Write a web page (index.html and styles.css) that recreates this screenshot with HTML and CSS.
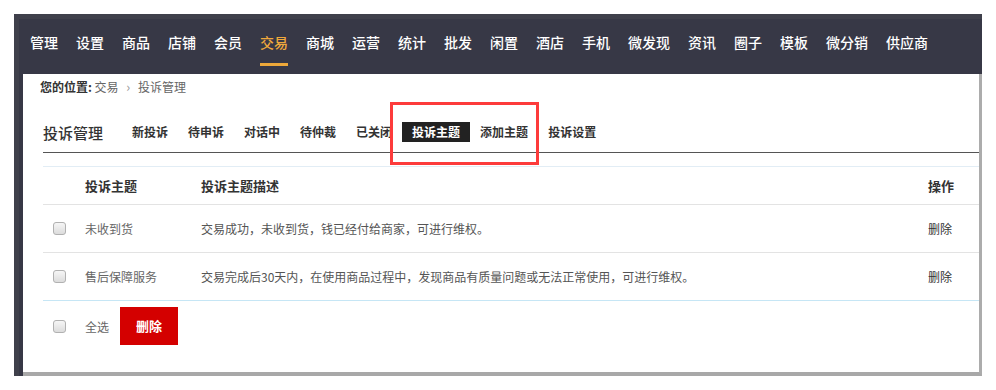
FILE: index.html
```html
<!DOCTYPE html>
<html lang="zh-CN">
<head>
    <meta charset="UTF-8">
    <title>投诉管理</title>
    <link rel="stylesheet" href="styles.css">
</head>
<body>
    <div class="frame">
        <div class="topnav">
            <a class="nav-item"><span>管理</span></a>
            <a class="nav-item"><span>设置</span></a>
            <a class="nav-item"><span>商品</span></a>
            <a class="nav-item"><span>店铺</span></a>
            <a class="nav-item"><span>会员</span></a>
            <a class="nav-item active"><span>交易</span></a>
            <a class="nav-item"><span>商城</span></a>
            <a class="nav-item"><span>运营</span></a>
            <a class="nav-item"><span>统计</span></a>
            <a class="nav-item"><span>批发</span></a>
            <a class="nav-item"><span>闲置</span></a>
            <a class="nav-item"><span>酒店</span></a>
            <a class="nav-item"><span>手机</span></a>
            <a class="nav-item"><span>微发现</span></a>
            <a class="nav-item"><span>资讯</span></a>
            <a class="nav-item"><span>圈子</span></a>
            <a class="nav-item"><span>模板</span></a>
            <a class="nav-item"><span>微分销</span></a>
            <a class="nav-item"><span>供应商</span></a>
        </div>

        <div class="content">
            <div class="crumb">
                <strong>您的位置:</strong> 交易
                <span class="arrow">&rsaquo;</span>
                投诉管理
            </div>

            <div class="main">
                <div class="tab-row">
                    <h3 class="page-title">投诉管理</h3>
                    <a class="tab">新投诉</a>
                    <a class="tab">待申诉</a>
                    <a class="tab">对话中</a>
                    <a class="tab">待仲裁</a>
                    <a class="tab">已关闭</a>
                    <a class="tab active">投诉主题</a>
                    <a class="tab">添加主题</a>
                    <a class="tab">投诉设置</a>
                </div>

                <table class="list">
                    <colgroup>
                        <col class="c-check">
                        <col class="c-name">
                        <col>
                        <col class="c-op">
                    </colgroup>
                    <thead>
                        <tr>
                            <th></th>
                            <th>投诉主题</th>
                            <th>投诉主题描述</th>
                            <th>操作</th>
                        </tr>
                    </thead>
                    <tbody>
                        <tr>
                            <td><input type="checkbox" class="chk"></td>
                            <td class="name">未收到货</td>
                            <td class="desc">交易成功，未收到货，钱已经付给商家，可进行维权。</td>
                            <td><a class="op">删除</a></td>
                        </tr>
                        <tr class="last">
                            <td><input type="checkbox" class="chk"></td>
                            <td class="name">售后保障服务</td>
                            <td class="desc">交易完成后30天内，在使用商品过程中，发现商品有质量问题或无法正常使用，可进行维权。</td>
                            <td><a class="op">删除</a></td>
                        </tr>
                    </tbody>
                    <tfoot>
                        <tr>
                            <td><input type="checkbox" class="chk"></td>
                            <td colspan="3">
                                <div class="batch">
                                    <span class="name">全选</span>
                                    <a class="btn-del">删除</a>
                                </div>
                            </td>
                        </tr>
                    </tfoot>
                </table>
            </div>
        </div>
    </div>

    <div class="mark"></div>
</body>
</html>
```

FILE: styles.css
```css
body {
    margin: 0;
    background: #fff;
    font-family: "Noto Sans CJK SC", "Microsoft YaHei", sans-serif;
    color: #333;
}
a {
    text-decoration: none;
    cursor: pointer;
}
.frame {
    margin: 14px 0 0 14px;
    width: 968px;
    height: 362px;
    background: #373846;
    box-shadow: inset 5px 5px 0 #3f404b;
    display: flex;
    flex-direction: column;
}
.topnav {
    height: 60px;
    padding-left: 7px;
    display: flex;
    flex-shrink: 0;
}
.nav-item {
    padding: 19px 9px 0;
    color: #fff;
    font-size: 14px;
    font-weight: 500;
    line-height: 18px;
}
.nav-item span {
    display: block;
    padding-bottom: 12px;
    border-bottom: 3px solid transparent;
}
.nav-item.active {
    color: #f0a93c;
}
.nav-item.active span {
    border-bottom-color: #eda83a;
}
.content {
    flex: 1;
    margin-left: 9px;
    padding-left: 17px;
    background: #fff;
    border-right: 3px solid #acacac;
    border-bottom: 4px solid #a8a8a8;
}
.crumb {
    height: 26px;
    line-height: 26px;
    font-size: 12px;
    color: #666;
}
.crumb strong {
    color: #333;
}
.crumb .arrow {
    color: #999;
    margin: 0 5px;
    font-size: 13px;
}
.main {
    margin-left: 3px;
}
.tab-row {
    margin-top: 22px;
    padding-bottom: 10px;
    border-bottom: 1px solid #555;
    display: flex;
    align-items: center;
}
.page-title {
    margin: 0 19px 0 0;
    font-size: 15px;
    font-weight: 500;
    line-height: 20px;
    color: #333;
    position: relative;
    top: 1px;
}
.tab {
    padding: 0 10px;
    height: 20px;
    line-height: 20px;
    font-size: 12px;
    font-weight: bold;
    color: #333;
}
.tab.active {
    background: #222;
    color: #fff;
}
.list {
    width: 100%;
    margin-top: 13px;
    border-collapse: collapse;
    table-layout: fixed;
    border-top: 1px solid #e2edf5;
}
.c-check {
    width: 42px;
}
.c-name {
    width: 116px;
}
.c-op {
    width: 51px;
}
.list th {
    height: 37px;
    padding: 0;
    text-align: left;
    font-size: 13px;
    font-weight: bold;
    color: #333;
    border-bottom: 1px solid #e3e3e3;
}
.list td {
    height: 47px;
    padding: 0;
    font-size: 12px;
    border-bottom: 1px solid #e3e3e3;
}
.list tbody tr.last td {
    border-bottom-color: #c6e6f5;
}
.list tfoot td {
    height: auto;
    padding-top: 6px;
    border-bottom: none;
}
.chk {
    -webkit-appearance: none;
    appearance: none;
    display: block;
    margin: 0 0 0 10px;
    width: 13px;
    height: 13px;
    border: 1px solid #b1b1b1;
    border-radius: 3px;
    background: linear-gradient(#f6f6f6, #dcdcdc);
    box-sizing: border-box;
}
.name {
    color: #666;
}
.desc {
    color: #555;
}
.op {
    color: #333;
}
.batch {
    display: flex;
    align-items: center;
}
.btn-del {
    margin-left: 11px;
    width: 58px;
    height: 38px;
    line-height: 38px;
    text-align: center;
    background: #d40000;
    color: #fff;
    font-size: 13px;
    font-weight: bold;
}
.mark {
    position: absolute;
    left: 390px;
    top: 102px;
    width: 149px;
    height: 63px;
    box-sizing: border-box;
    border: 3px solid #fd3b3b;
}
```
